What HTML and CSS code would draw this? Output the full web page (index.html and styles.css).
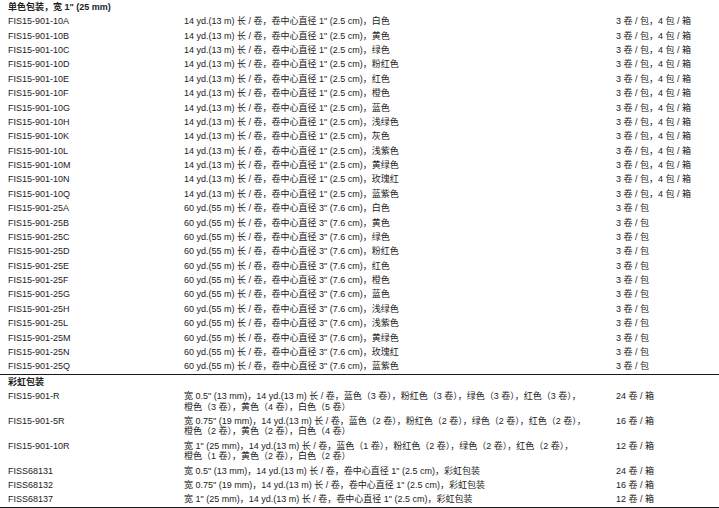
FILE: index.html
```html
<!DOCTYPE html>
<html lang="zh-CN">
<head>
<meta charset="utf-8">
<title>胶带规格</title>
<link rel="stylesheet" href="styles.css">
</head>
<body>
<table class="spec">
<colgroup><col class="c1"><col class="c2"><col class="c3"></colgroup>
<tbody>
<tr class="head"><td colspan="3">单色包装，宽 1" (25 mm)</td></tr>
<tr><td>FIS15-901-10A</td><td>14 yd.(13 m) 长 / 卷，卷中心直径 1" (2.5 cm)，白色</td><td>3 卷 / 包，4 包 / 箱</td></tr>
<tr><td>FIS15-901-10B</td><td>14 yd.(13 m) 长 / 卷，卷中心直径 1" (2.5 cm)，黄色</td><td>3 卷 / 包，4 包 / 箱</td></tr>
<tr><td>FIS15-901-10C</td><td>14 yd.(13 m) 长 / 卷，卷中心直径 1" (2.5 cm)，绿色</td><td>3 卷 / 包，4 包 / 箱</td></tr>
<tr><td>FIS15-901-10D</td><td>14 yd.(13 m) 长 / 卷，卷中心直径 1" (2.5 cm)，粉红色</td><td>3 卷 / 包，4 包 / 箱</td></tr>
<tr><td>FIS15-901-10E</td><td>14 yd.(13 m) 长 / 卷，卷中心直径 1" (2.5 cm)，红色</td><td>3 卷 / 包，4 包 / 箱</td></tr>
<tr><td>FIS15-901-10F</td><td>14 yd.(13 m) 长 / 卷，卷中心直径 1" (2.5 cm)，橙色</td><td>3 卷 / 包，4 包 / 箱</td></tr>
<tr><td>FIS15-901-10G</td><td>14 yd.(13 m) 长 / 卷，卷中心直径 1" (2.5 cm)，蓝色</td><td>3 卷 / 包，4 包 / 箱</td></tr>
<tr><td>FIS15-901-10H</td><td>14 yd.(13 m) 长 / 卷，卷中心直径 1" (2.5 cm)，浅绿色</td><td>3 卷 / 包，4 包 / 箱</td></tr>
<tr><td>FIS15-901-10K</td><td>14 yd.(13 m) 长 / 卷，卷中心直径 1" (2.5 cm)，灰色</td><td>3 卷 / 包，4 包 / 箱</td></tr>
<tr><td>FIS15-901-10L</td><td>14 yd.(13 m) 长 / 卷，卷中心直径 1" (2.5 cm)，浅紫色</td><td>3 卷 / 包，4 包 / 箱</td></tr>
<tr><td>FIS15-901-10M</td><td>14 yd.(13 m) 长 / 卷，卷中心直径 1" (2.5 cm)，黄绿色</td><td>3 卷 / 包，4 包 / 箱</td></tr>
<tr><td>FIS15-901-10N</td><td>14 yd.(13 m) 长 / 卷，卷中心直径 1" (2.5 cm)，玫瑰红</td><td>3 卷 / 包，4 包 / 箱</td></tr>
<tr><td>FIS15-901-10Q</td><td>14 yd.(13 m) 长 / 卷，卷中心直径 1" (2.5 cm)，蓝紫色</td><td>3 卷 / 包，4 包 / 箱</td></tr>
<tr><td>FIS15-901-25A</td><td>60 yd.(55 m) 长 / 卷，卷中心直径 3" (7.6 cm)，白色</td><td>3 卷 / 包</td></tr>
<tr><td>FIS15-901-25B</td><td>60 yd.(55 m) 长 / 卷，卷中心直径 3" (7.6 cm)，黄色</td><td>3 卷 / 包</td></tr>
<tr><td>FIS15-901-25C</td><td>60 yd.(55 m) 长 / 卷，卷中心直径 3" (7.6 cm)，绿色</td><td>3 卷 / 包</td></tr>
<tr><td>FIS15-901-25D</td><td>60 yd.(55 m) 长 / 卷，卷中心直径 3" (7.6 cm)，粉红色</td><td>3 卷 / 包</td></tr>
<tr><td>FIS15-901-25E</td><td>60 yd.(55 m) 长 / 卷，卷中心直径 3" (7.6 cm)，红色</td><td>3 卷 / 包</td></tr>
<tr><td>FIS15-901-25F</td><td>60 yd.(55 m) 长 / 卷，卷中心直径 3" (7.6 cm)，橙色</td><td>3 卷 / 包</td></tr>
<tr><td>FIS15-901-25G</td><td>60 yd.(55 m) 长 / 卷，卷中心直径 3" (7.6 cm)，蓝色</td><td>3 卷 / 包</td></tr>
<tr><td>FIS15-901-25H</td><td>60 yd.(55 m) 长 / 卷，卷中心直径 3" (7.6 cm)，浅绿色</td><td>3 卷 / 包</td></tr>
<tr><td>FIS15-901-25L</td><td>60 yd.(55 m) 长 / 卷，卷中心直径 3" (7.6 cm)，浅紫色</td><td>3 卷 / 包</td></tr>
<tr><td>FIS15-901-25M</td><td>60 yd.(55 m) 长 / 卷，卷中心直径 3" (7.6 cm)，黄绿色</td><td>3 卷 / 包</td></tr>
<tr><td>FIS15-901-25N</td><td>60 yd.(55 m) 长 / 卷，卷中心直径 3" (7.6 cm)，玫瑰红</td><td>3 卷 / 包</td></tr>
<tr class="end"><td>FIS15-901-25Q</td><td>60 yd.(55 m) 长 / 卷，卷中心直径 3" (7.6 cm)，蓝紫色</td><td>3 卷 / 包</td></tr>
<tr class="head"><td colspan="3">彩虹包装</td></tr>
<tr><td>FIS15-901-R</td><td>宽 0.5" (13 mm)，14 yd.(13 m) 长 / 卷，蓝色（3 卷），粉红色（3 卷），绿色（3 卷），红色（3 卷），<br>橙色（3 卷），黄色（4 卷），白色（5 卷）</td><td>24 卷 / 箱</td></tr>
<tr><td>FIS15-901-5R</td><td>宽 0.75" (19 mm)，14 yd.(13 m) 长 / 卷，蓝色（2 卷），粉红色（2 卷），绿色（2 卷），红色（2 卷），<br>橙色（2 卷），黄色（2 卷），白色（4 卷）</td><td>16 卷 / 箱</td></tr>
<tr><td>FIS15-901-10R</td><td>宽 1" (25 mm)，14 yd.(13 m) 长 / 卷，蓝色（1 卷），粉红色（2 卷），绿色（2 卷），红色（2 卷），<br>橙色（1 卷），黄色（2 卷），白色（2 卷）</td><td>12 卷 / 箱</td></tr>
<tr><td>FISS68131</td><td>宽 0.5" (13 mm)，14 yd.(13 m) 长 / 卷，卷中心直径 1" (2.5 cm)，彩虹包装</td><td>24 卷 / 箱</td></tr>
<tr><td>FISS68132</td><td>宽 0.75" (19 mm)，14 yd.(13 m) 长 / 卷，卷中心直径 1" (2.5 cm)，彩虹包装</td><td>16 卷 / 箱</td></tr>
<tr class="end"><td>FISS68137</td><td>宽 1" (25 mm)，14 yd.(13 m) 长 / 卷，卷中心直径 1" (2.5 cm)，彩虹包装</td><td>12 卷 / 箱</td></tr>
</tbody>
</table>
</body>
</html>
```

FILE: styles.css
```css
html, body {
  margin: 0;
  padding: 0;
  background: #ffffff;
}

body {
  font-family: "Liberation Sans", "Noto Sans CJK SC", sans-serif;
  font-size: 9px;
  color: #222222;
}

.spec {
  width: 719px;
  border-collapse: collapse;
  table-layout: fixed;
}

.spec .c1 { width: 184px; }
.spec .c2 { width: 432px; }
.spec .c3 { width: 103px; }

.spec td {
  padding: 1.95px 0;
  line-height: 10.5px;
  vertical-align: top;
  white-space: nowrap;
}

.spec td:first-child {
  padding-left: 8px;
}

.spec .head td {
  font-weight: bold;
}

.spec .end td {
  border-bottom: 1px solid #1a1a1a;
}
```
